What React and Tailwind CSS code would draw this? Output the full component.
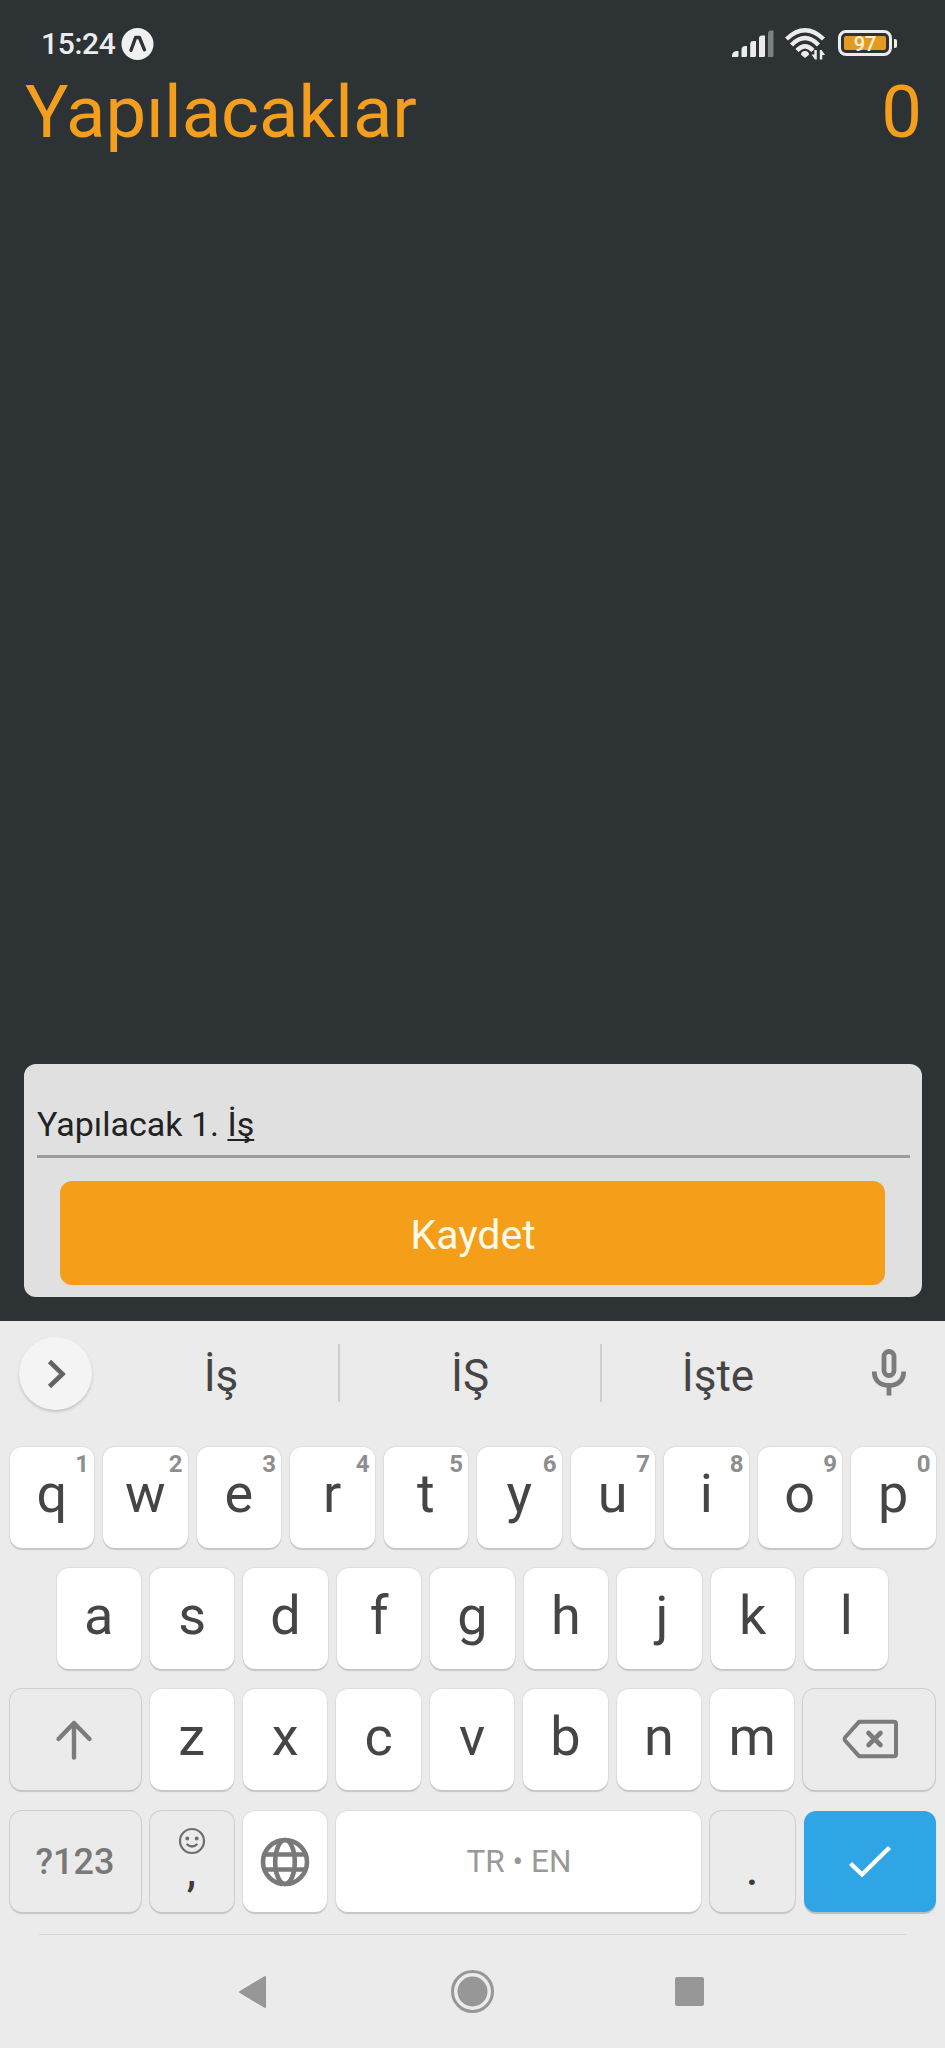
import React from "react";

const rowOne = ["q", "w", "e", "r", "t", "y", "u", "i", "o", "p"];
const rowTwo = ["a", "s", "d", "f", "g", "h", "j", "k", "l"];
const rowThree = ["z", "x", "c", "v", "b", "n", "m"];

const whiteKey =
  "relative flex h-[101px] min-w-0 items-center justify-center rounded-[12px] bg-white shadow-[0_2px_1px_#c6c6c6,0_0_1px_1px_#dedede]";
const grayKey =
  "relative flex h-[101px] min-w-0 items-center justify-center rounded-[12px] bg-[#ebebeb] shadow-[0_2px_1px_#c6c6c6,0_0_0_1px_#cfcfcf]";

function LetterKey({ letter, hint }) {
  return (
    <button
      className={`${whiteKey} flex-1 text-[54px] leading-[64px] text-[#454545] ${hint ? "pb-[8px]" : "pb-[5px]"} ${
        letter === "j" ? "indent-[5px]" : ""
      }`}
    >
      {letter}
      {hint && (
        <span className="absolute right-[5px] top-[3px] text-[24px] font-bold leading-[28px] text-[#8e8e8e]">
          {hint}
        </span>
      )}
    </button>
  );
}

function StatusBar() {
  return (
    <div className="flex h-[70px] items-start justify-between pl-[41px] pr-[48px] text-[#ececf0]">
      <div className="flex items-center gap-[5px] pt-[26px]">
        <span className="h-[35px] w-[75px] whitespace-nowrap text-[30px] font-medium leading-[35px] tracking-[-0.3px]">15:24</span>
        <svg width="33" height="34" viewBox="0 0 33 34">
          <circle cx="16.500" cy="17" r="16" fill="#f0f0f0" />
          <path d="M10 23.300 14.600 10.500H18.400L23.500 22.800" fill="none" stroke="#2d3235" strokeWidth="3.400" strokeLinecap="round" strokeLinejoin="round" />
        </svg>
      </div>
      <div className="flex items-start pt-[27px]">
        <svg width="44" height="32" viewBox="0 0 44 32" fill="#ececec">
          <path d="M1 30v-1.500a5 5 0 0 1 5-4.500h1.500v4.500a1.500 1.500 0 0 1-1.500 1.500z" />
          <path d="M10.500 30v-7a4 4 0 0 1 4-4h1.500v9.500a1.500 1.500 0 0 1-1.500 1.500z" />
          <path d="M19.200 30V17a3 3 0 0 1 3-3H25v14.500a1.500 1.500 0 0 1-1.500 1.500z" />
          <path d="M28 30V11.500a3 3 0 0 1 3-3H34v20a1.500 1.500 0 0 1-1.500 1.500z" />
          <path d="M37 30V6.500a3 3 0 0 1 3-3h2.500v25A1.500 1.500 0 0 1 41 30z" fill="#7c8083" />
        </svg>
        <svg className="ml-[10px]" width="41" height="34" viewBox="0 0 41 34">
          <g fill="none" stroke="#ececec" strokeWidth="4.400">
            <path d="M1.500 12Q20 -5.500 38.500 12" />
            <path d="M6.500 18Q20 4 33.500 18" />
            <path d="M12 23.500Q20 15 28 23.500" />
          </g>
          <path d="M20 31l-4-3.200q0-3.800 4-3.800t4 3.800z" fill="#ececec" />
          <path d="M31.800 23v9.500h-1.800l-3.500-5h2.800v-4.500zM34.800 32.500V23h1.800l3.500 5h-2.800v4.500z" fill="#ececec" />
        </svg>
        <div className="ml-[12px] mt-[3px] flex items-center gap-[2px]">
          <div className="h-[26px] w-[54px] rounded-[8px] border-[3px] border-[#ececec] p-[3px]">
            <div className="flex h-[14px] items-center justify-center rounded-[2px] bg-[#e39a22] pt-[1px] text-[20px] font-medium leading-[20px] text-[#fff6da]">
              97
            </div>
          </div>
          <div className="h-[9px] w-[3px] rounded-r-[2px] bg-[#ececec]" />
        </div>
      </div>
    </div>
  );
}

function TodoForm() {
  return (
    <div className="ml-[24px] mr-[23px] mt-auto flex h-[233px] flex-col rounded-[12px] bg-[#e0e0e0] pl-[13px] pr-[12px]">
      <div className="flex h-[94px] items-end border-b-[3px] border-[#9b9b9b] pb-[11px] text-[34px] leading-[40px] text-[#222]">
        <span className="whitespace-pre">Yapılacak 1. </span>
        <span className="underline decoration-[1.500px] underline-offset-[3px] [text-decoration-skip-ink:none]">İş</span>
      </div>
      <button className="ml-[23px] mr-[25px] mt-[23px] flex h-[104px] items-center justify-center rounded-[12px] bg-[#f49e1a] pl-[1px] pt-[3px] text-[41px] leading-[48px] text-[#fffbe8]">
        Kaydet
      </button>
    </div>
  );
}

function SuggestionStrip() {
  return (
    <div className="flex h-[126px] items-start text-[44px] leading-[52px] text-[#454545]">
      <button className="ml-[19px] mt-[16px] flex h-[73px] w-[73px] items-center justify-center rounded-full bg-[#f4f4f4] shadow-[0_2px_3px_#c4c4c4]">
        <svg width="30" height="34" viewBox="0 0 30 34">
          <path d="M8.500 4.500 21.500 17 8.500 29.500" fill="none" stroke="#646464" strokeWidth="4.600" />
        </svg>
      </button>
      <div className="ml-[12px] mt-[29px] w-[234px] text-center">İş</div>
      <div className="mt-[23px] h-[58px] w-[2px] bg-[#cfcfcf]" />
      <div className="mt-[29px] w-[260px] text-center">İŞ</div>
      <div className="mt-[23px] h-[58px] w-[2px] bg-[#cfcfcf]" />
      <div className="mt-[29px] w-[232px] text-center">İşte</div>
      <svg className="ml-[38px] mt-[27px]" width="34" height="50" viewBox="0 0 34 50" fill="none" stroke="#7b7b7b">
        <rect x="12" y="3.500" width="10" height="24" rx="5" strokeWidth="4.800" />
        <path d="M2.300 23.500c0 8.700 5.700 14 14.700 14s14.700-5.300 14.700-14M17 37v10.500" strokeWidth="4.800" />
      </svg>
    </div>
  );
}

function Keyboard() {
  return (
    <div className="flex h-[727px] flex-col bg-[#ebebeb]">
      <SuggestionStrip />
      <div className="flex flex-col gap-[20px] px-[9.500px]">
        <div className="flex gap-[9px]">
          {rowOne.map((letter, i) => (
            <LetterKey key={letter} letter={letter} hint={String((i + 1) % 10)} />
          ))}
        </div>
        <div className="flex gap-[9px] px-[47px]">
          {rowTwo.map((letter) => (
            <LetterKey key={letter} letter={letter} />
          ))}
        </div>
        <div className="flex gap-[9px]">
          <button className={`${grayKey} w-[131px] pr-[2px]`}>
            <svg width="40" height="42" viewBox="0 0 40 42" fill="none" stroke="#7b7b7b" strokeWidth="4.400" strokeLinecap="round" strokeLinejoin="round">
              <path d="M20 38.500V4M4.500 20 20 4l15.500 16" />
            </svg>
          </button>
          {rowThree.map((letter) => (
            <LetterKey key={letter} letter={letter} />
          ))}
          <button className={`${grayKey} w-[132px] pb-[1px] pl-[2px]`}>
            <svg width="58" height="42" viewBox="0 0 58 42" fill="none" stroke="#7b7b7b" strokeWidth="4" strokeLinejoin="round" strokeLinecap="round">
              <path d="M18 3.800h35a2 2 0 0 1 2 2v30.400a2 2 0 0 1-2 2H18L4 22.500q-1-1.500 0-3z" />
              <path d="m27.500 15 12 12M39.500 15 27.500 27" strokeWidth="4.600" />
            </svg>
          </button>
        </div>
        <div className="mt-[1px] flex gap-[9px]">
          <button className={`${grayKey} w-[131px] text-[36px] font-medium leading-[42px] text-[#797979]`}>?123</button>
          <button className={`${grayKey} w-[84px] flex-col text-[42px] font-medium leading-[50px] text-[#3c3c3c]`}>
            <svg className="shrink-0" width="28" height="28" viewBox="0 0 28 28" fill="none" stroke="#6d6d6d" strokeWidth="2.200">
              <circle cx="14" cy="14" r="12" />
              <circle cx="9.300" cy="11.500" r="1.900" fill="#6d6d6d" stroke="none" />
              <circle cx="18.700" cy="11.500" r="1.900" fill="#6d6d6d" stroke="none" />
              <path d="M8.500 17q5.500 5 11 0" />
            </svg>
            <span className="-mt-[8px]">,</span>
          </button>
          <button className={`${whiteKey} w-[84px]`}>
            <svg width="50" height="50" viewBox="0 0 50 50" fill="none" stroke="#797979" strokeWidth="4.600">
              <circle cx="25" cy="25" r="22" />
              <ellipse cx="25" cy="25" rx="9.800" ry="22" />
              <path d="M5 17.500h40M5 32.500h40" />
            </svg>
          </button>
          <button className={`${whiteKey} flex-1 pl-[2px] text-[31.500px] leading-[37px] text-[#999]`}>TR • EN</button>
          <button className={`${grayKey} w-[85px] pt-[19px] text-[42px] font-medium leading-[50px] text-[#3c3c3c]`}>.</button>
          <button className="flex h-[101px] w-[132px] items-center justify-center rounded-[12px] bg-[#2fa5e6] shadow-[0_2px_1px_#b5bec5]">
            <svg width="44" height="34" viewBox="0 0 44 34" fill="none" stroke="#fff" strokeWidth="4.400">
              <path d="M2.500 18.500 14 29.500 41.500 2.500" />
            </svg>
          </button>
        </div>
      </div>
      <div className="mx-[39px] mt-[22px] h-px shrink-0 bg-[#d5d5d5]" />
      <div className="flex items-center pt-[34px]">
        <svg className="ml-[238px]" width="29" height="34" viewBox="0 0 29 34">
          <path d="M27 2v30L2 17z" fill="#979797" stroke="#979797" strokeWidth="2" strokeLinejoin="round" />
        </svg>
        <svg className="ml-[183px]" width="45" height="45" viewBox="0 0 45 45">
          <circle cx="22.500" cy="22.500" r="20" fill="none" stroke="#979797" strokeWidth="3" />
          <circle cx="22.500" cy="22.500" r="15" fill="#979797" />
        </svg>
        <div className="ml-[180px] h-[29px] w-[29px] rounded-[2px] bg-[#979797]" />
      </div>
    </div>
  );
}

export default function App() {
  return (
    <div className="flex h-[2048px] w-[945px] flex-col overflow-hidden bg-[#2d3235] font-['Roboto',sans-serif]">
      <StatusBar />
      <header className="flex items-start justify-between pl-[25px] pr-[23px] pt-[1px] text-[72.500px] leading-[84px] text-[#f49e1e]">
        <h1>Yapılacaklar</h1>
        <span>0</span>
      </header>
      <TodoForm />
      <div className="h-[24px] shrink-0" />
      <Keyboard />
    </div>
  );
}
